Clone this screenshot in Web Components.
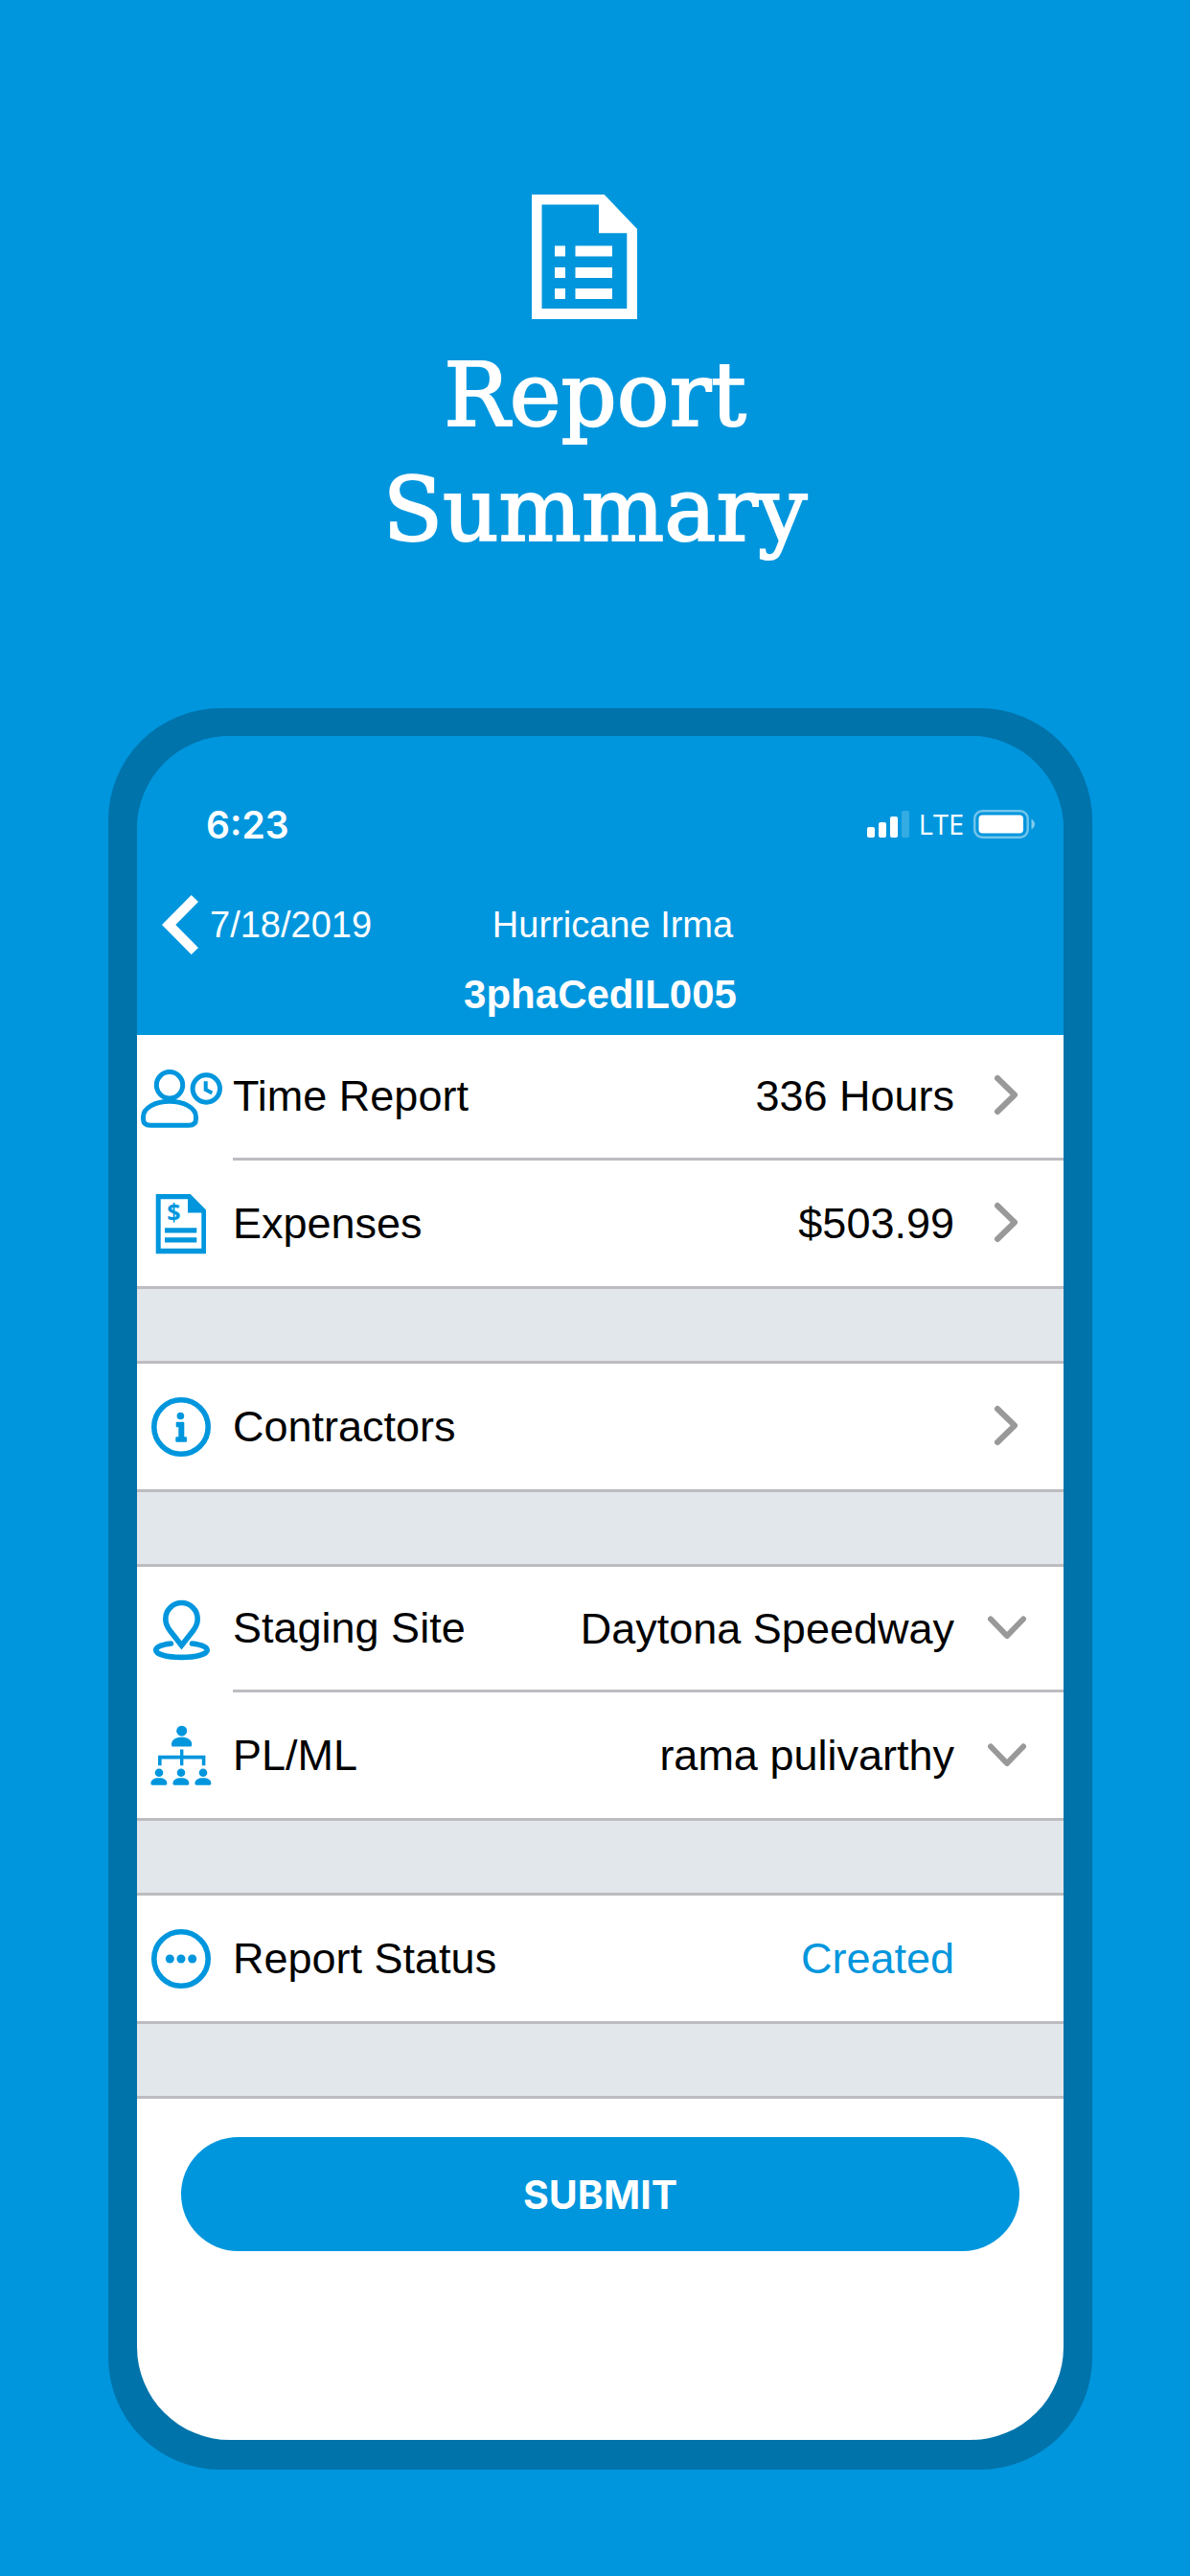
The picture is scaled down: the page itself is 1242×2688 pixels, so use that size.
<!DOCTYPE html>
<html lang="en">
<head>
<meta charset="utf-8">
<meta name="viewport" content="width=device-width, initial-scale=1">
<title>Report Summary</title>
<style>
    :root {
        --blue: #0096dd;
        --frame: #0073aa;
        --line: #bcbcc1;
        --band: #e2e7eb;
        --chevron: #999;
    }

    body {
        margin: 0;
        min-height: 100vh;
        background-color: var(--blue);
        font-family: "Liberation Sans", Arial, sans-serif;
    }
</style>
</head>
<body>

<promo-heading>Report<br>Summary</promo-heading>

<phone-frame>
    <app-header time="6:23" network="LTE" back="7/18/2019" event="Hurricane Irma">3phaCedIL005</app-header>

    <report-group>
        <report-row icon="time" kind="link" value="336 Hours">Time Report</report-row>
        <report-row icon="expenses" kind="link" value="$503.99">Expenses</report-row>
    </report-group>
    <report-group>
        <report-row icon="info" kind="link">Contractors</report-row>
    </report-group>
    <report-group>
        <report-row icon="site" kind="select" value="Daytona Speedway">Staging Site</report-row>
        <report-row icon="people" kind="select" value="rama pulivarthy">PL/ML</report-row>
    </report-group>
    <report-group>
        <report-row icon="status" kind="status" value="Created">Report Status</report-row>
    </report-group>

    <submit-button>SUBMIT</submit-button>
</phone-frame>

<script>
// All row icons share one 100x80 box
const icons = {
    time: `
        <g fill="none" stroke="currentColor" stroke-width="5">
            <circle cx="34" cy="28.3" r="13.7"/>
            <path d="M34 45.3C20 45.3 6.5 51.5 6.5 61.5V63.5Q6.5 70.3 14 70.3H54Q61.5 70.3 61.5 63.5V61.5C61.5 51.5 48 45.3 34 45.3Z"/>
            <circle cx="72.3" cy="32" r="14.2"/>
            <path d="M71.7 24.3V33L78.3 36.6" stroke-width="4"/>
        </g>`,
    expenses: `
        <path fill="currentColor" fill-rule="evenodd" d="M19.7 9H55.7L72 25.5V71.2H19.7ZM24.7 14.2V65.8H67.3V28.5H53V14.2Z"/>
        <path fill="currentColor" d="M29 44.2H62.3V49.5H29ZM29 54.2H62.3V59.5H29Z"/>
        <text x="38.3" y="37.3" text-anchor="middle" font-family="Open Sans, sans-serif" font-weight="700" font-size="25" fill="currentColor">$</text>`,
    info: `
        <circle cx="46" cy="40" r="28.2" fill="none" stroke="currentColor" stroke-width="5.6"/>
        <circle cx="45.4" cy="28.5" r="3.8" fill="currentColor"/>
        <path fill="currentColor" d="M41.5 34.8H48.3Q49.3 34.8 49.3 35.8V50.2H51Q52 50.2 52 51.2V54.8Q52 55.8 51 55.8H41.3Q40.3 55.8 40.3 54.8V51.2Q40.3 50.2 41.3 50.2H43.3V40.3H41.5Q40.7 40.3 40.7 39.3V35.8Q40.7 34.8 41.5 34.8Z"/>`,
    site: `
        <g fill="none" stroke="currentColor" stroke-width="5.6">
            <path d="M46.5 58L34 42C31.2 38 29.8 34 29.8 30.2A16.7 16.7 0 0 1 63.2 30.2C63.2 34 61.8 38 59 42Z"/>
            <path d="M35.4 56C25 57.2 19.7 60 19.7 63C19.7 67.2 31 70.4 46.4 70.4S73.2 67.2 73.2 63C73.2 60 68 57.2 57.5 56" stroke-linecap="round"/>
        </g>`,
    people: `
        <g fill="currentColor">
            <circle cx="46.7" cy="14.2" r="5.5"/>
            <path d="M36 28C36 23.5 40.5 20.8 46.6 20.8S57.2 23.5 57.2 28V29Q57.2 30.6 55.6 30.6H37.6Q36 30.6 36 29Z"/>
            <path d="M45 33.5H48.4V39.8H71.4V50.2H67.8V43.5H48.4V50.2H45V43.5H25.6V50.2H22V39.8H45Z"/>
            <circle cx="23" cy="57.8" r="4.3"/>
            <circle cx="46" cy="57.8" r="4.3"/>
            <circle cx="69" cy="57.8" r="4.3"/>
            <path d="M14.4 69C14.4 65.2 18 63.2 22.9 63.2S31.4 65.2 31.4 69Q31.4 70.8 29.8 70.8H16Q14.4 70.8 14.4 69Z"/>
            <path d="M37.4 69C37.4 65.2 41 63.2 45.9 63.2S54.4 65.2 54.4 69Q54.4 70.8 52.8 70.8H39Q37.4 70.8 37.4 69Z"/>
            <path d="M60.4 69C60.4 65.2 64 63.2 68.9 63.2S77.4 65.2 77.4 69Q77.4 70.8 75.8 70.8H62Q60.4 70.8 60.4 69Z"/>
        </g>`,
    status: `
        <circle cx="46" cy="40" r="28.2" fill="none" stroke="currentColor" stroke-width="5.6"/>
        <g fill="currentColor">
            <circle cx="34.3" cy="40" r="4.5"/>
            <circle cx="46" cy="40" r="4.5"/>
            <circle cx="57.7" cy="40" r="4.5"/>
        </g>`
};

const chevrons = {
    link: '<path d="M15 5L33 22.5L15 40"/>',
    select: '<path d="M8 14.500L25 32L42 14.500"/>'
};

class PromoHeading extends HTMLElement {
    constructor() {
        super();
        const shadow = this.attachShadow({ mode: 'open' });
        shadow.innerHTML = `
            <style>
                :host {
                    display: flex;
                    flex-direction: column;
                    align-items: center;
                    gap: 20px;
                    padding: 203px 24px 146px;
                    color: #fff;
                }

                svg {
                    display: block;
                    width: 132px;
                    height: 130px;
                }

                h1 {
                    margin: 0;
                    font-family: "DejaVu Serif", serif;
                    font-size: 91px;
                    font-weight: 400;
                    line-height: 120px;
                    text-align: center;
                    -webkit-text-stroke: 2px #fff;
                }
            </style>
            <svg viewBox="0 0 132 130" fill="currentColor" aria-hidden="true">
                <path fill-rule="evenodd" d="M0 0H75.700L110 36V130H0ZM10.500 10.500V119H99.300V40.300H70V10.500Z"/>
                <path d="M24 53.500H35V64.500H24ZM45.500 53.500H84V64.500H45.500ZM24 76H35V87H24ZM45.500 76H84V87H45.500ZM24 98H35V109H24ZM45.500 98H84V109H45.500Z"/>
            </svg>
            <h1><slot></slot></h1>
        `;
    }
}

class PhoneFrame extends HTMLElement {
    constructor() {
        super();
        const shadow = this.attachShadow({ mode: 'open' });
        shadow.innerHTML = `
            <style>
                :host {
                    display: block;
                    margin: 0 102px 111px 113px;
                    padding: 29px 30px 31px;
                    border-radius: 117px;
                    background-color: var(--frame);
                }

                /* blue behind the header keeps white out of the rounded top corners */
                main {
                    padding-bottom: 197px;
                    border-radius: 97px;
                    background: linear-gradient(var(--blue) 200px, #fff 200px);
                    overflow: hidden;
                }
            </style>
            <main><slot></slot></main>
        `;
    }
}

class AppHeader extends HTMLElement {
    constructor() {
        super();
        const shadow = this.attachShadow({ mode: 'open' });
        shadow.innerHTML = `
            <style>
                :host {
                    display: block;
                    padding: 62px 0 12px;
                    background-color: var(--blue);
                    color: #fff;
                }

                .status {
                    display: flex;
                    align-items: center;
                    justify-content: space-between;
                    height: 60px;
                    padding: 0 30px 0 72px;
                }

                .time {
                    font-family: Inter, sans-serif;
                    font-size: 39px;
                    font-weight: 600;
                }

                .signals {
                    display: flex;
                    align-items: center;
                    gap: 10px;
                }

                .network {
                    font-family: "Open Sans", sans-serif;
                    font-size: 29px;
                    line-height: 40px;
                }

                svg {
                    display: block;
                    flex: none;
                }

                .nav {
                    display: grid;
                    grid-template-columns: 1fr auto 1fr;
                    align-items: center;
                    height: 70px;
                    margin-top: 40px;
                    padding-left: 26px;
                    font-size: 38px;
                    line-height: 42px;
                }

                .back {
                    display: flex;
                    align-items: center;
                    gap: 12px;
                    color: inherit;
                    text-decoration: none;
                }

                h2 {
                    margin: 8px 0 0;
                    font-size: 42px;
                    line-height: 60px;
                    text-align: center;
                }
            </style>
            <div class="status">
                <span class="time"></span>
                <div class="signals">
                    <svg width="44" height="28" viewBox="0 0 44 28" fill="currentColor" aria-hidden="true">
                        <rect y="17" width="8" height="11" rx="2"/>
                        <rect x="12" y="12" width="8" height="16" rx="2"/>
                        <rect x="24" y="6" width="8" height="22" rx="2"/>
                        <rect x="36" width="8" height="28" rx="2" opacity=".2"/>
                    </svg>
                    <span class="network"></span>
                    <svg width="64" height="30" viewBox="0 0 64 30" fill="currentColor" aria-hidden="true">
                        <rect x="1.200" y="1.200" width="55.500" height="27.600" rx="8" fill="none" stroke="currentColor" stroke-width="2.400" opacity=".45"/>
                        <rect x="5.500" y="5.500" width="46.500" height="19" rx="4"/>
                        <path d="M60.500 9.500Q64 12 64 15T60.500 20.500Z" opacity=".5"/>
                    </svg>
                </div>
            </div>
            <nav class="nav">
                <a class="back" href="#">
                    <svg width="38" height="62" viewBox="0 0 38 62" fill="currentColor" aria-hidden="true">
                        <path d="M30.700 0L38 7L14.300 31L38 55L30.700 62L0 31Z"/>
                    </svg>
                    <span class="date"></span>
                </a>
                <span class="event"></span>
            </nav>
            <h2><slot></slot></h2>
        `;
    }

    connectedCallback() {
        this.shadowRoot.querySelector('.time').textContent = this.getAttribute('time');
        this.shadowRoot.querySelector('.network').textContent = this.getAttribute('network');
        this.shadowRoot.querySelector('.date').textContent = this.getAttribute('back');
        this.shadowRoot.querySelector('.event').textContent = this.getAttribute('event');
    }
}

class ReportGroup extends HTMLElement {
    constructor() {
        super();
        const shadow = this.attachShadow({ mode: 'open' });
        shadow.innerHTML = `
            <style>
                :host {
                    display: block;
                }

                /* grey band that closes each group */
                .band {
                    box-sizing: border-box;
                    height: 81px;
                    border: solid var(--line);
                    border-width: 3px 0;
                    background-color: var(--band);
                }

                ::slotted(report-row:not(:last-child)) {
                    --divider: var(--line);
                    --divider-width: 3px;
                }
            </style>
            <slot></slot>
            <div class="band"></div>
        `;
    }
}

class ReportRow extends HTMLElement {
    constructor() {
        super();
        this.attachShadow({ mode: 'open' });
    }

    connectedCallback() {
        const kind = this.getAttribute('kind');
        const value = this.getAttribute('value') || '';
        const chevron = chevrons[kind]
            ? `<svg class="chevron" viewBox="0 0 48 48" aria-hidden="true">${chevrons[kind]}</svg>`
            : '';

        let body = `
            <span class="label"><slot></slot></span>
            <span class="value"></span>
            ${chevron}
        `;
        if (kind === 'select') {
            body = `
                <label class="label" for="choice"><slot></slot></label>
                <select id="choice"><option></option></select>
                ${chevron}
            `;
        }

        const tag = kind === 'link' ? 'a' : 'div';
        this.shadowRoot.innerHTML = `
            <style>
                :host {
                    display: block;
                    background-color: #fff;
                    color: #000;
                    font-size: 45px;
                }

                .row {
                    display: grid;
                    grid-template-columns: 100px 1fr;
                    height: 131px;
                    color: inherit;
                    text-decoration: none;
                }

                .icon {
                    align-self: center;
                    width: 100px;
                    height: 80px;
                    color: var(--blue);
                }

                .content {
                    display: grid;
                    grid-template-columns: auto 1fr 30px 48px;
                    align-items: center;
                    padding-right: 36px;
                }

                /* the icon cell keeps the same free height as the text beside it */
                .icon-cell,
                .content {
                    box-sizing: border-box;
                    height: 131px;
                    border-bottom: var(--divider-width, 0) solid var(--divider, transparent);
                }

                .icon-cell {
                    display: flex;
                    border-bottom-color: transparent;
                }

                .value {
                    grid-column: 2;
                    text-align: right;
                }

                .status .value {
                    color: var(--blue);
                }

                select {
                    grid-area: 1 / 2 / 2 / 5;
                    appearance: none;
                    width: 100%;
                    height: 100%;
                    margin: 0;
                    padding: 0 78px 0 0;
                    border: 0;
                    background: none;
                    color: inherit;
                    font: inherit;
                    text-align: right;
                    text-align-last: right;
                }

                .chevron {
                    grid-area: 1 / 4 / 2 / 5;
                    width: 48px;
                    height: 48px;
                    fill: none;
                    stroke: var(--chevron);
                    stroke-width: 6;
                    stroke-linecap: round;
                    stroke-linejoin: round;
                    pointer-events: none;
                }
            </style>
            <${tag} class="row ${kind}"${tag === 'a' ? ' href="#"' : ''}>
                <span class="icon-cell">
                    <svg class="icon" viewBox="0 0 100 80" aria-hidden="true">${icons[this.getAttribute('icon')]}</svg>
                </span>
                <div class="content">${body}</div>
            </${tag}>
        `;

        const target = this.shadowRoot.querySelector('option') || this.shadowRoot.querySelector('.value');
        target.textContent = value;
    }
}

class SubmitButton extends HTMLElement {
    constructor() {
        super();
        const shadow = this.attachShadow({ mode: 'open' });
        shadow.innerHTML = `
            <style>
                :host {
                    display: block;
                    padding: 40px 46px 0;
                }

                button {
                    display: block;
                    width: 100%;
                    height: 119px;
                    border: 0;
                    border-radius: 60px;
                    background-color: var(--blue);
                    color: #fff;
                    font-family: Inter, sans-serif;
                    font-size: 41px;
                    font-weight: 700;
                }
            </style>
            <button type="button"><slot></slot></button>
        `;
    }
}

customElements.define('promo-heading', PromoHeading);
customElements.define('phone-frame', PhoneFrame);
customElements.define('app-header', AppHeader);
customElements.define('report-group', ReportGroup);
customElements.define('report-row', ReportRow);
customElements.define('submit-button', SubmitButton);
</script>
</body>
</html>
